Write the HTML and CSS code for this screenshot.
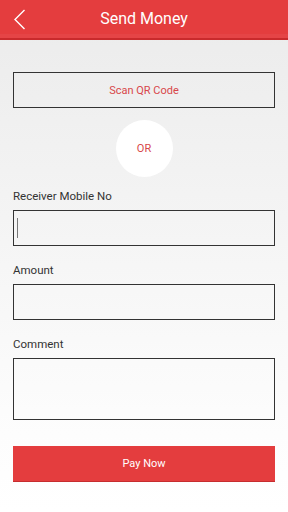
FILE: index.html
```html
<!DOCTYPE html>
<html lang="en">
<head>
    <meta charset="UTF-8">
    <meta name="viewport" content="width=device-width, initial-scale=1.0">
    <title>Send Money</title>
    <link rel="stylesheet" href="styles.css">
</head>
<body>
    <div class="header">
        <button class="back" type="button">
            <svg width="14" height="24" viewBox="0 0 14 24">
                <polyline points="11.5,2 2,11.5 11.5,21" fill="none" stroke="#fff" stroke-width="1.4"/>
            </svg>
        </button>
        <h1 class="title">Send Money</h1>
        <span></span>
    </div>

    <div class="container">
        <button class="btn btn-scan" type="button">Scan QR Code</button>

        <div class="or">OR</div>

        <form class="form">
            <div class="form-group first">
                <label for="mobile">Receiver Mobile No</label>
                <div class="input-wrap">
                    <input type="text" id="mobile" class="form-control">
                    <span class="caret"></span>
                </div>
            </div>
            <div class="form-group">
                <label for="amount">Amount</label>
                <input type="text" id="amount" class="form-control">
            </div>
            <div class="form-group">
                <label for="comment">Comment</label>
                <textarea id="comment" class="form-control textarea"></textarea>
            </div>
            <button type="submit" class="btn btn-pay">Pay Now</button>
        </form>
    </div>
</body>
</html>
```

FILE: styles.css
```css
* {
    box-sizing: border-box;
    margin: 0;
    padding: 0;
}

html, body {
    height: 100%;
}

body {
    font-family: Roboto, 'Noto Sans', sans-serif;
    background: linear-gradient(#ebebeb, #fdfdfd 85%, #fff);
    color: #333;
}

.header {
    display: grid;
    grid-template-columns: 40px 1fr 40px;
    align-items: center;
    height: 40px;
    background-color: #e43d3e;
    border-bottom: 2px solid #c92a2c;
    box-shadow: inset 0 -4px 0 #e54446;
}

.back {
    display: flex;
    align-items: center;
    justify-content: center;
    width: 40px;
    height: 38px;
    background: none;
    border: none;
}

.back svg {
    margin-top: 2px;
}

.title {
    text-align: center;
    color: #fff;
    font-size: 16px;
    font-weight: 400;
    line-height: 38px;
}

.container {
    padding: 0 13px;
}

.btn {
    display: block;
    width: 100%;
    height: 36px;
    font-family: Roboto, 'Noto Sans', sans-serif;
    font-size: 11px;
    cursor: pointer;
}

.btn-scan {
    margin-top: 32px;
    background: transparent;
    border: 1px solid #333;
    color: #d8474a;
}

.or {
    display: flex;
    align-items: center;
    justify-content: center;
    width: 57px;
    height: 57px;
    margin: 12px auto 0;
    border-radius: 50%;
    background-color: #fff;
    color: #d8474a;
    font-size: 11px;
}

.form-group {
    margin-top: 17px;
}

.form-group.first {
    margin-top: 12px;
}

.form-group label {
    display: block;
    font-size: 11.5px;
    line-height: 14px;
    margin-bottom: 7px;
    color: #333;
}

.input-wrap {
    position: relative;
}

.form-control {
    display: block;
    width: 100%;
    height: 36px;
    background: transparent;
    border: 1px solid #333;
    border-radius: 0;
    outline: none;
    font-family: Roboto, sans-serif;
    font-size: 12px;
}

.caret {
    position: absolute;
    left: 4px;
    top: 8px;
    width: 1px;
    height: 20px;
    background-color: #777;
}

.textarea {
    height: 62px;
    resize: none;
}

.btn-pay {
    margin-top: 26px;
    background-color: #e43d3e;
    border: none;
    border-bottom: 1px solid #c62d2f;
    color: #fff;
}
```
